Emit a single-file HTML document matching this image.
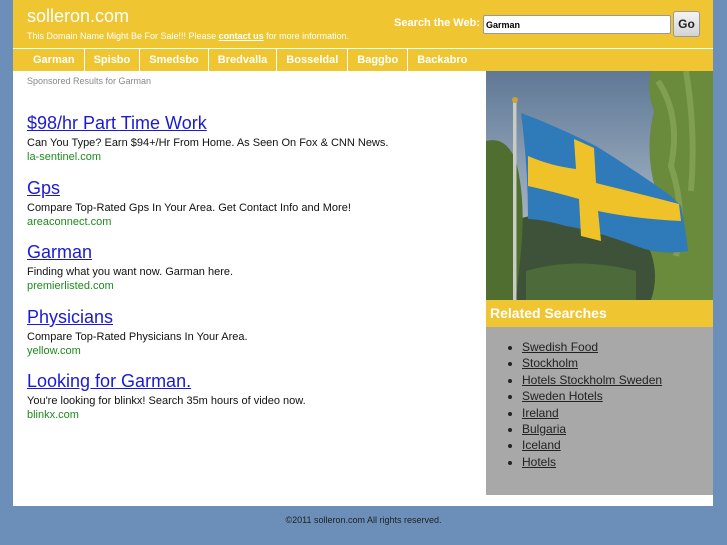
<!DOCTYPE html>
<html><head><style>
body{margin:0;width:727px;height:545px;background:#6b8fb8;font-family:"Liberation Sans",sans-serif;position:relative;overflow:hidden}
#wrap{position:absolute;left:13px;top:0;width:700px;height:506px;background:#fff}
#hdr{position:absolute;left:0;top:0;width:700px;height:48px;background:#efc632}
#hdr h1{position:absolute;left:14px;top:6px;margin:0;font-size:18px;color:#fff;font-weight:normal}
#hdr .sub{position:absolute;left:14px;top:31px;font-size:9px;color:#fff}
#hdr .sub a{color:#fff;font-weight:bold;text-decoration:underline}
#hdr .sl{position:absolute;left:381px;top:17px;font-size:11px;color:#fff;font-weight:bold}
#hdr input{position:absolute;left:470px;top:15px;width:182px;height:15px;border:1px solid #999;border-radius:2px;font:bold 9px "Liberation Sans",sans-serif;padding:1px 2px}
#hdr .go{position:absolute;left:660px;top:11px;width:25px;height:24px;background:linear-gradient(#f4f4f4,#d4d4d4);border:1px solid #999;border-radius:3px;font-size:12px;font-weight:bold;text-align:center;line-height:24px;color:#222}
#nav{position:absolute;left:0;top:49px;width:700px;height:22px;background:#efc632;font-size:11px;font-weight:bold;color:#fff}
#nav span{display:inline-block;padding:0 9px;line-height:22px;border-left:1px solid #fff}
#nav span:first-child{border-left:none;padding-left:20px}
.spon{position:absolute;left:14px;top:76px;font-size:9px;color:#888}
.ad{position:absolute;left:14px}
.ad a{font-size:18px;color:#1a1ad6;text-decoration:underline}
.ad .d{font-size:11px;color:#111;margin-top:3px}
.ad .u{font-size:11px;color:#1e8a1e;margin-top:2px}
#img{position:absolute;left:473px;top:71px;width:227px;height:229px;overflow:hidden}
#rh{position:absolute;left:473px;top:300px;width:227px;height:27px;background:#efc632;color:#fff;font-weight:bold;font-size:14px;line-height:26px;text-indent:4px}
#rl{position:absolute;left:473px;top:327px;width:227px;height:168px;background:#a8a8a8}
#rl ul{margin:12px 0 0 0;padding-left:36px;font-size:12px}
#rl li{line-height:16.4px;color:#222}
#rl a{color:#222;text-decoration:underline}
.ft{position:absolute;top:515px;left:0;width:727px;text-align:center;font-size:9px;color:#222}
</style></head><body>
<div id="wrap">
<div id="hdr"><h1>solleron.com</h1><div class="sub">This Domain Name Might Be For Sale!!! Please <a>contact us</a> for more information.</div>
<div class="sl">Search the Web:</div><input value="Garman"><div class="go">Go</div></div>
<div id="nav"><span>Garman</span><span>Spisbo</span><span>Smedsbo</span><span>Bredvalla</span><span>Bosseldal</span><span>Baggbo</span><span>Backabro</span></div>
<div class="spon">Sponsored Results for Garman</div>
<div class="ad" style="top:113px"><a>$98/hr Part Time Work</a><div class="d">Can You Type? Earn $94+/Hr From Home. As Seen On Fox &amp; CNN News.</div><div class="u">la-sentinel.com</div></div>
<div class="ad" style="top:178px"><a>Gps</a><div class="d">Compare Top-Rated Gps In Your Area. Get Contact Info and More!</div><div class="u">areaconnect.com</div></div>
<div class="ad" style="top:242px"><a>Garman</a><div class="d">Finding what you want now. Garman here.</div><div class="u">premierlisted.com</div></div>
<div class="ad" style="top:307px"><a>Physicians</a><div class="d">Compare Top-Rated Physicians In Your Area.</div><div class="u">yellow.com</div></div>
<div class="ad" style="top:371px"><a>Looking for Garman.</a><div class="d">You're looking for blinkx! Search 35m hours of video now.</div><div class="u">blinkx.com</div></div>
<div id="img"><svg width="227" height="229" viewBox="0 0 227 229">
<defs><linearGradient id="s" x1="0" y1="0" x2="0" y2="1"><stop offset="0" stop-color="#5f7896"/><stop offset="0.45" stop-color="#8fa2b6"/><stop offset="0.7" stop-color="#a8b4c0"/></linearGradient></defs>
<rect width="227" height="229" fill="url(#s)"/>
<path d="M0 160 Q50 135 110 145 Q170 150 227 135 L227 229 L0 229Z" fill="#3d5238"/>
<path d="M40 200 Q90 185 150 200 L150 229 L40 229Z" fill="#4c6a3a"/>
<path d="M0 70 Q20 65 30 90 Q40 130 35 180 L30 229 L0 229Z" fill="#4f6e30"/>
<path d="M160 0 L227 0 L227 229 L165 229 Q175 200 160 170 Q150 140 170 120 Q158 80 168 40 Q160 20 165 0Z" fill="#6a8a3c"/>
<path d="M172 10 Q195 45 185 95 Q200 140 190 185 M200 0 Q210 60 205 120" stroke="#8aa858" stroke-width="6" fill="none" opacity=".7"/>
<rect x="27" y="30" width="3.5" height="199" fill="#c9ccc4"/>
<circle cx="29" cy="29" r="3" fill="#c9a238"/>
<path d="M35 42 Q70 55 110 75 Q150 100 185 125 L195 135 Q200 160 202 180 Q175 185 150 175 Q110 160 80 155 Q55 148 42 148 Q42 95 35 42Z" fill="#2f7ab8"/>
<path d="M88 68 L108 77 L110 112 Q150 122 193 133 L195 150 Q150 148 112 140 L115 170 L95 165 L93 128 Q65 120 42 115 L42 85 Q65 95 90 98Z" fill="#efc229"/>
</svg></div>
<div id="rh">Related Searches</div>
<div id="rl"><ul><li><a>Swedish Food</a></li><li><a>Stockholm</a></li><li><a>Hotels Stockholm Sweden</a></li><li><a>Sweden Hotels</a></li><li><a>Ireland</a></li><li><a>Bulgaria</a></li><li><a>Iceland</a></li><li><a>Hotels</a></li></ul></div>
</div>
<div class="ft">©2011 solleron.com All rights reserved.</div>
</body></html>
